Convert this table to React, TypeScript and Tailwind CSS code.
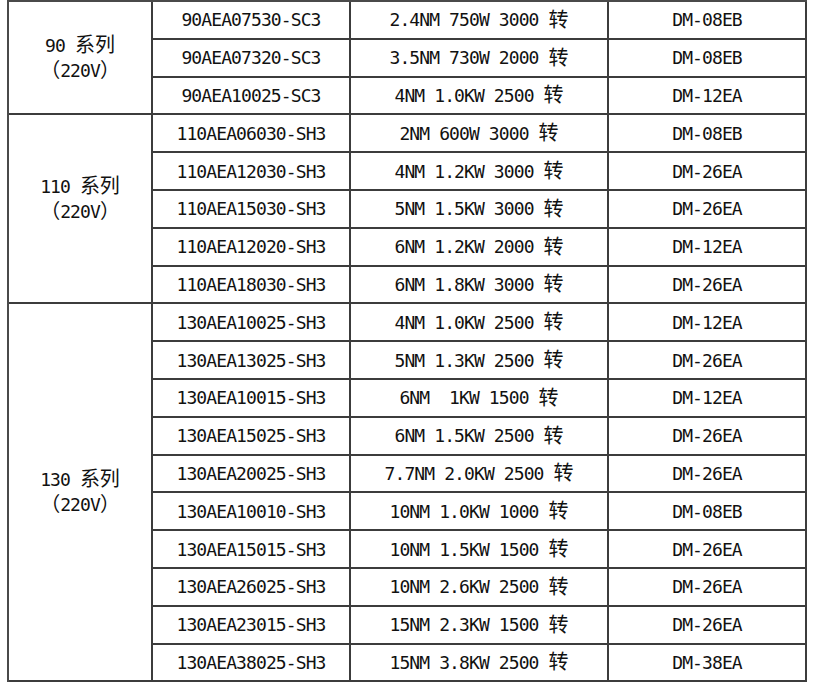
import React from "react"

interface Model {
  code: string
  spec: string
  driver: string
}

interface Series {
  name: string
  shift?: string
  models: Model[]
}

const series: Series[] = [
  {
    name: "90",
    models: [
      { code: "90AEA07530-SC3", spec: "2.4NM 750W 3000", driver: "DM-08EB" },
      { code: "90AEA07320-SC3", spec: "3.5NM 730W 2000", driver: "DM-08EB" },
      { code: "90AEA10025-SC3", spec: "4NM 1.0KW 2500", driver: "DM-12EA" },
    ],
  },
  {
    name: "110",
    shift: "pb-[20px]",
    models: [
      { code: "110AEA06030-SH3", spec: "2NM 600W 3000", driver: "DM-08EB" },
      { code: "110AEA12030-SH3", spec: "4NM 1.2KW 3000", driver: "DM-26EA" },
      { code: "110AEA15030-SH3", spec: "5NM 1.5KW 3000", driver: "DM-26EA" },
      { code: "110AEA12020-SH3", spec: "6NM 1.2KW 2000", driver: "DM-12EA" },
      { code: "110AEA18030-SH3", spec: "6NM 1.8KW 3000", driver: "DM-26EA" },
    ],
  },
  {
    name: "130",
    models: [
      { code: "130AEA10025-SH3", spec: "4NM 1.0KW 2500", driver: "DM-12EA" },
      { code: "130AEA13025-SH3", spec: "5NM 1.3KW 2500", driver: "DM-26EA" },
      { code: "130AEA10015-SH3", spec: "6NM  1KW 1500", driver: "DM-12EA" },
      { code: "130AEA15025-SH3", spec: "6NM 1.5KW 2500", driver: "DM-26EA" },
      { code: "130AEA20025-SH3", spec: "7.7NM 2.0KW 2500", driver: "DM-26EA" },
      { code: "130AEA10010-SH3", spec: "10NM 1.0KW 1000", driver: "DM-08EB" },
      { code: "130AEA15015-SH3", spec: "10NM 1.5KW 1500", driver: "DM-26EA" },
      { code: "130AEA26025-SH3", spec: "10NM 2.6KW 2500", driver: "DM-26EA" },
      { code: "130AEA23015-SH3", spec: "15NM 2.3KW 1500", driver: "DM-26EA" },
      { code: "130AEA38025-SH3", spec: "15NM 3.8KW 2500", driver: "DM-38EA" },
    ],
  },
]

const spanClass: Record<number, string> = {
  3: "row-span-3",
  5: "row-span-5",
  10: "row-span-10",
}

// 中文字符用全角宽度
function Cjk({ children }: { children: React.ReactNode }) {
  return <span className="text-[20px] tracking-normal">{children}</span>
}

const cell = "flex items-center justify-center border-r-2 border-b-2 border-[#3c3c3c] whitespace-pre"

export default function App() {
  return (
    <div className="min-h-screen bg-white">
      <div className="ml-[7px] grid w-[800px] grid-cols-[144px_198px_258px_198px] grid-rows-[repeat(18,37.8px)] border-t-2 border-l-2 border-[#4a4a4a] font-['DejaVu_Sans_Mono','Noto_Sans_CJK_SC',monospace] text-[18px] tracking-[-0.9px] text-[#111]">
        {series.map((s) => (
          <React.Fragment key={s.name}>
            <div className={`${cell} ${spanClass[s.models.length]} ${s.shift ?? ""} flex-col leading-[24px]`}>
              <div>
                {s.name} <Cjk>系列</Cjk>
              </div>
              <div>
                <Cjk>（</Cjk>220V<Cjk>）</Cjk>
              </div>
            </div>
            {s.models.map((m) => (
              <React.Fragment key={m.code}>
                <div className={cell}>{m.code}</div>
                <div className={cell}>
                  {m.spec} <Cjk>转</Cjk>
                </div>
                <div className={cell}>{m.driver}</div>
              </React.Fragment>
            ))}
          </React.Fragment>
        ))}
      </div>
    </div>
  )
}
